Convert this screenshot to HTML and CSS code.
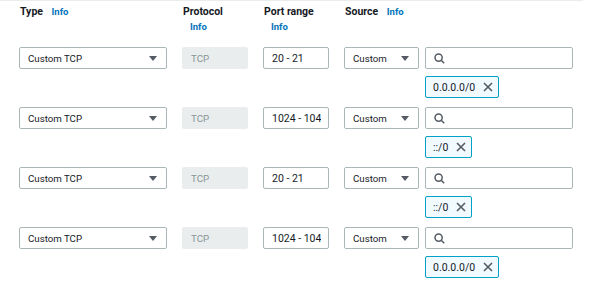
FILE: index.html
```html
<!DOCTYPE html>
<html lang="en">
<head>
  <meta charset="UTF-8">
  <meta name="viewport" content="width=device-width, initial-scale=1.0">
  <title>Inbound rules</title>
  <link rel="stylesheet" href="styles.css">
</head>
<body>
  <div class="rules">
    <!-- Column headers -->
    <div class="grid head">
      <div class="label">Type <a class="info" href="#">Info</a></div>
      <div class="label">Protocol <a class="info block" href="#">Info</a></div>
      <div class="label">Port range <a class="info block" href="#">Info</a></div>
      <div class="label">Source <a class="info" href="#">Info</a></div>
    </div>

    <!-- Rule rows -->
    <div class="grid rule">
      <div class="select">Custom TCP <svg class="caret" width="8" height="5" viewBox="0 0 8 5"><path d="M0 0h8L4 5z"/></svg></div>
      <div class="field disabled">TCP</div>
      <div class="field port"><span class="val">20 - 21</span></div>
      <div class="source">
        <div class="select">Custom <svg class="caret" width="8" height="5" viewBox="0 0 8 5"><path d="M0 0h8L4 5z"/></svg></div>
        <div class="field search"><svg width="11" height="11" viewBox="0 0 11 11"><circle cx="4.6" cy="4.6" r="3.6"/><path d="M7.2 7.2L10.2 10.2"/></svg></div>
        <div class="token">0.0.0.0/0 <svg width="10" height="10" viewBox="0 0 10 10"><path d="M1 1l8 8M9 1l-8 8"/></svg></div>
      </div>
    </div>

    <div class="grid rule">
      <div class="select">Custom TCP <svg class="caret" width="8" height="5" viewBox="0 0 8 5"><path d="M0 0h8L4 5z"/></svg></div>
      <div class="field disabled">TCP</div>
      <div class="field port"><span class="val">1024 - 1048</span></div>
      <div class="source">
        <div class="select">Custom <svg class="caret" width="8" height="5" viewBox="0 0 8 5"><path d="M0 0h8L4 5z"/></svg></div>
        <div class="field search"><svg width="11" height="11" viewBox="0 0 11 11"><circle cx="4.6" cy="4.6" r="3.6"/><path d="M7.2 7.2L10.2 10.2"/></svg></div>
        <div class="token">::/0 <svg width="10" height="10" viewBox="0 0 10 10"><path d="M1 1l8 8M9 1l-8 8"/></svg></div>
      </div>
    </div>

    <div class="grid rule">
      <div class="select">Custom TCP <svg class="caret" width="8" height="5" viewBox="0 0 8 5"><path d="M0 0h8L4 5z"/></svg></div>
      <div class="field disabled">TCP</div>
      <div class="field port"><span class="val">20 - 21</span></div>
      <div class="source">
        <div class="select">Custom <svg class="caret" width="8" height="5" viewBox="0 0 8 5"><path d="M0 0h8L4 5z"/></svg></div>
        <div class="field search"><svg width="11" height="11" viewBox="0 0 11 11"><circle cx="4.6" cy="4.6" r="3.6"/><path d="M7.2 7.2L10.2 10.2"/></svg></div>
        <div class="token">::/0 <svg width="10" height="10" viewBox="0 0 10 10"><path d="M1 1l8 8M9 1l-8 8"/></svg></div>
      </div>
    </div>

    <div class="grid rule">
      <div class="select">Custom TCP <svg class="caret" width="8" height="5" viewBox="0 0 8 5"><path d="M0 0h8L4 5z"/></svg></div>
      <div class="field disabled">TCP</div>
      <div class="field port"><span class="val">1024 - 1048</span></div>
      <div class="source">
        <div class="select">Custom <svg class="caret" width="8" height="5" viewBox="0 0 8 5"><path d="M0 0h8L4 5z"/></svg></div>
        <div class="field search"><svg width="11" height="11" viewBox="0 0 11 11"><circle cx="4.6" cy="4.6" r="3.6"/><path d="M7.2 7.2L10.2 10.2"/></svg></div>
        <div class="token">0.0.0.0/0 <svg width="10" height="10" viewBox="0 0 10 10"><path d="M1 1l8 8M9 1l-8 8"/></svg></div>
      </div>
    </div>
  </div>
</body>
</html>
```

FILE: styles.css
```css
body {
  margin: 0;
  font-family: Roboto, 'Liberation Sans', Arial, sans-serif;
  color: #16191f;
  background-color: #fff;
}

.rules {
  width: 583px;
  box-sizing: border-box;
  border-top: 1px solid #eaeded;
  padding: 3px 0 0 19px;
}

.grid {
  display: grid;
  grid-template-columns: 148px 66px 66px 229px;
  column-gap: 15px;
}

.head {
  height: 43px;
}

.label {
  font-size: 10.5px;
  font-weight: 700;
  line-height: 15px;
  padding-left: 1px;
}

.info {
  font-size: 9.5px;
  font-weight: 700;
  color: #0073bb;
  text-decoration: none;
  margin-left: 6px;
}

.info.block {
  display: block;
  margin-left: 7px;
}

.rule {
  margin-bottom: 9px;
  align-items: start;
}

.select, .field {
  height: 22px;
  box-sizing: border-box;
  border: 1px solid #aab7b8;
  border-radius: 2px;
  font-size: 9.7px;
  display: flex;
  align-items: center;
  white-space: nowrap;
}

.select {
  justify-content: space-between;
  padding: 0 9px 0 8px;
}

.caret {
  fill: #545b64;
}

.field {
  padding: 0 8px;
}

.disabled {
  border-color: #eaeded;
  background-color: #eaeded;
  color: #879596;
}

.port {
  font-size: 10.5px;
  padding: 0 7px 0 8px;
}

.port .val {
  display: block;
  overflow: hidden;
  min-width: 0;
}

.source {
  display: grid;
  grid-template-columns: 75px 148px;
  column-gap: 6px;
  row-gap: 7px;
}

.search svg {
  fill: none;
  stroke: #545b64;
  stroke-width: 1.5;
}

.token {
  grid-column: 2;
  justify-self: start;
  height: 22px;
  box-sizing: border-box;
  border: 1px solid #00a1c9;
  border-radius: 2px;
  background-color: #f1faff;
  font-size: 10.5px;
  display: flex;
  align-items: center;
  gap: 8px;
  padding: 0 5px 0 7px;
}

.token svg {
  fill: none;
  stroke: #545b64;
  stroke-width: 1.6;
}
```
